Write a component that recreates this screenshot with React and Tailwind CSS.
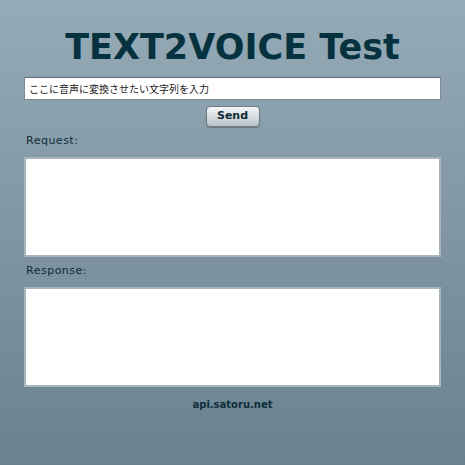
import React, { useState } from "react";

const labelFont = { fontFamily: "'DejaVu Sans', Verdana, sans-serif" };

export default function App() {
  const [text, setText] = useState("ここに音声に変換させたい文字列を入力");

  return (
    <div
      className="min-h-[465px] w-full bg-gradient-to-b from-[#95abb7] to-[#6a818f] flex flex-col items-center pt-[26px]"
      style={labelFont}
    >
      <h1 className="text-[35px] leading-[42px] font-bold text-[#06323f] font-['DejaVu_Sans',Verdana,sans-serif]">
        TEXT2VOICE Test
      </h1>

      <div className="w-[417px] mt-[9px] flex flex-col">
        <input
          value={text}
          onChange={(e) => setText(e.target.value)}
          className="block h-[23px] w-full bg-white border border-[#7d8a92] border-t-[#5e6a71] px-[4px] text-[10px] text-[#222] outline-none font-['Liberation_Sans','Noto_Sans_CJK_JP',sans-serif]"
        />

        <div className="flex justify-center mt-[6px]">
          <button className="w-[54px] h-[21px] rounded-[4px] border border-[#6f7b82] bg-gradient-to-b from-[#f4f6f7] to-[#b9c3c8] text-[11px] font-bold text-[#0c2a35] shadow-[0_1px_1px_rgba(0,0,0,0.25)] font-['DejaVu_Sans',Verdana,sans-serif]">
            Send
          </button>
        </div>

        <div className="mt-[6px] pl-[2px] text-[11px] tracking-[0.5px] text-[#0f2d38] leading-[16px]">
          Request:
        </div>
        <textarea
          readOnly
          className="block mt-[8px] h-[100px] w-full resize-none bg-white border-2 border-[#aab5bb] outline-none"
        />

        <div className="mt-[6px] pl-[2px] text-[11px] tracking-[0.5px] text-[#0f2d38] leading-[16px]">
          Response:
        </div>
        <textarea
          readOnly
          className="block mt-[8px] h-[100px] w-full resize-none bg-white border-2 border-[#aab5bb] outline-none"
        />

        <div className="mt-[11px] text-center text-[10px] leading-[14px] font-bold text-[#0c2d39]">
          api.satoru.net
        </div>
      </div>
    </div>
  );
}
